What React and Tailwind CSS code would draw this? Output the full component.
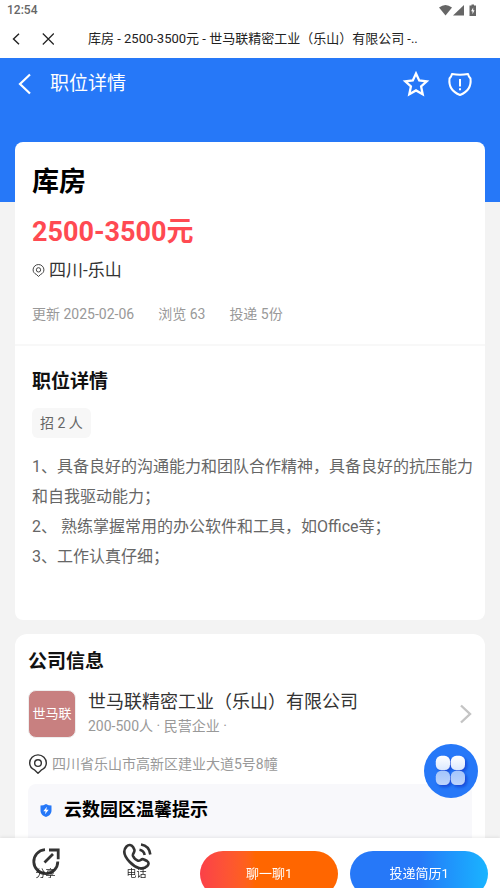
import React, { useState } from "react";

const duties = [
  "1、具备良好的沟通能力和团队合作精神，具备良好的抗压能力和自我驱动能力；",
  "2、 熟练掌握常用的办公软件和工具，如Office等；",
  "3、工作认真仔细；",
];

function PinIcon({ className }) {
  return (
    <svg viewBox="0 0 24 24" fill="none" stroke="currentColor" strokeWidth="1.7" className={className}>
      <path d="M12 23l-3.8-3.6C4.4 17.6 2 14.6 2 10.8a10 9.8 0 0 1 20 0c0 3.8-2.4 6.8-6.2 8.6z" strokeLinejoin="round" />
      <circle cx="12" cy="10.8" r="4" />
    </svg>
  );
}

function StatusBar() {
  return (
    <div className="h-5 pl-[7px] pr-[23px] flex items-center justify-between">
      <span className="text-xs font-medium text-[#666]">12:54</span>
      <svg viewBox="0 0 38 12" fill="#666" className="w-[38px] h-3">
        <path d="M0 3.5Q6.5-1.5 13 3.5L6.5 11.5z" />
        <path d="M14 11.5L25 1v10.5z" />
        <path d="M32.5 1.5V.5h2.500v1h2V12h-6.500V1.5z" />
        <path d="M34.2 3.5v2.7h1.300l-2 4V7.3h-1.400z" fill="#fff" />
      </svg>
    </div>
  );
}

function BrowserBar() {
  return (
    <div className="h-[38px] flex items-center text-[#222]">
      <button aria-label="返回" className="w-8 h-8 flex items-center justify-center">
        <svg viewBox="0 0 12 12" fill="none" stroke="currentColor" strokeWidth="1.4" className="w-3 h-3">
          <path d="M9 0.8L3.5 6l5.5 5.2" />
        </svg>
      </button>
      <button aria-label="关闭" className="w-8 h-8 flex items-center justify-center">
        <svg viewBox="0 0 12 12" fill="none" stroke="currentColor" strokeWidth="1.2" className="w-3 h-3">
          <path d="M0.8 0.5l11 11M11.8 0.5l-11 11" />
        </svg>
      </button>
      <div className="flex-1 min-w-0 pl-6 pr-4 text-[13px] truncate">
        库房 - 2500-3500元 - 世马联精密工业（乐山）有限公司 -..
      </div>
    </div>
  );
}

function PageHeader() {
  const [starred, setStarred] = useState(false);

  return (
    <div className="h-[52px] pl-4 pr-[26px] flex items-center text-white">
      <button aria-label="返回上一页" className="w-[18px] h-6 shrink-0">
        <svg viewBox="0 0 18 24" fill="none" stroke="currentColor" strokeWidth="2.2" className="w-[18px] h-6">
          <path d="M14 2.5L4 12l10 9.5" />
        </svg>
      </button>
      <h1 className="flex-1 pl-4 text-[19px]">职位详情</h1>
      <button aria-label="收藏" onClick={() => setStarred(!starred)} className="w-7 h-7 mr-4">
        <svg viewBox="0 0 28 28" fill={starred ? "currentColor" : "none"} stroke="currentColor" strokeWidth="2.3" className="w-7 h-7">
          <path d="M14 3.5l3.2 7 7.5.8-5.6 5.2 1.6 7.7L14 20.4l-6.7 3.8 1.6-7.7-5.6-5.2 7.5-.8z" />
        </svg>
      </button>
      <button aria-label="举报" className="w-7 h-7">
        <svg viewBox="0 0 28 28" fill="none" stroke="currentColor" strokeWidth="2" className="w-7 h-7">
          <path d="M6 4Q14 5.5 22 4q.4 2 2.5 4.500c.8 7-1.5 13-10.5 16.500C5 21.5 2.7 15.5 3.5 8.5Q5.6 6 6 4z" strokeLinejoin="round" />
          <path d="M14 9v7.5M14 18.3v2" />
        </svg>
      </button>
    </div>
  );
}

function JobCard() {
  return (
    <section className="bg-white rounded-lg">
      <div className="px-[17px] pt-5 pb-[18px] border-b-2 border-[#f8f8f8]">
        <h2 className="text-[27px] leading-10 font-bold text-black">库房</h2>
        <p className="mt-3 text-[27px] leading-9 font-bold text-[#ff4a52]">2500-3500元</p>
        <p className="mt-2 flex items-center gap-1 text-[17px] leading-6 text-[#333]">
          <PinIcon className="w-[13px] h-[13px]" />
          四川-乐山
        </p>
        <p className="mt-5 flex gap-6 text-sm leading-6 text-[#999]">
          <span>更新 2025-02-06</span>
          <span>浏览 63</span>
          <span>投递 5份</span>
        </p>
      </div>
      <div className="pl-[17px] pr-2 pt-[22px] pb-12">
        <h3 className="text-[19px] leading-7 font-bold text-[#111]">职位详情</h3>
        <span className="mt-3 inline-block px-2 rounded-md bg-[#f7f7f7] text-sm leading-[30px] text-[#666]">招 2 人</span>
        <div className="mt-[14px] text-[16px] leading-[30px] text-[#666]">
          {duties.map((d) => (
            <p key={d}>{d}</p>
          ))}
        </div>
      </div>
    </section>
  );
}

function CompanyCard() {
  return (
    <section className="bg-white rounded-xl px-[13px] pt-[14px]">
      <h3 className="text-[19px] leading-7 font-bold text-[#111]">公司信息</h3>
      <a href="#company" className="mt-[14px] flex items-center">
        <span className="w-12 h-12 rounded-lg border border-[#eee] bg-[#c88080] flex items-center justify-center text-[13px] text-white shrink-0">
          世马联
        </span>
        <span className="flex-1 min-w-0 pl-3">
          <span className="block text-lg leading-6 text-[#333]">世马联精密工业（乐山）有限公司</span>
          <span className="block text-sm leading-6 text-[#999]">200-500人 · 民营企业 ·</span>
        </span>
        <svg viewBox="0 0 14 20" fill="none" stroke="#c4c4c4" strokeWidth="2.4" className="w-[14px] h-5">
          <path d="M3 1.5l9 8.5-9 8.5" />
        </svg>
      </a>
      <p className="mt-[14px] flex items-center gap-1 text-sm leading-6 text-[#999]">
        <PinIcon className="w-5 h-5 text-[#333]" />
        四川省乐山市高新区建业大道5号8幢
      </p>
      <div className="mt-2 rounded-lg bg-[#f8f8fb] px-3 pt-3 pb-20">
        <h4 className="flex items-center gap-3 text-lg leading-7 font-bold text-black">
          <svg viewBox="0 0 12 13" className="w-3 h-[13px]">
            <path d="M6 0q2.5 1.6 5.5 1.6V6.5C11.5 10 9 12 6 13 3 12 .5 10 .5 6.5V1.6Q3.5 1.6 6 0z" fill="#2678f8" />
            <path d="M6.9 2.8L3.3 7.2h2.3l-.6 3 3.7-4.500H6.3z" fill="#fff" />
          </svg>
          云数园区温馨提示
        </h4>
      </div>
    </section>
  );
}

function FloatingMenu() {
  return (
    <button aria-label="菜单" className="fixed right-[22px] bottom-[90px] w-[54px] h-[54px] rounded-full bg-[#2678f8]">
      <svg viewBox="0 0 54 54" className="w-[54px] h-[54px]">
        <defs>
          <linearGradient id="top" x1="0" y1="0" x2="0" y2="1">
            <stop offset="0" stopColor="#fff" />
            <stop offset="1" stopColor="#dbe8fe" />
          </linearGradient>
          <linearGradient id="bottom" x1="0" y1="0" x2="0" y2="1">
            <stop offset="0" stopColor="#a3c5fb" />
            <stop offset="1" stopColor="#bdd4fc" />
          </linearGradient>
          <filter id="shade" x="-30%" y="-30%" width="170%" height="170%">
            <feDropShadow dx="2" dy="2" stdDeviation="1.5" floodColor="#0a3fd0" floodOpacity="0.8" />
          </filter>
        </defs>
        <g filter="url(#shade)">
          <rect x="11.8" y="11.8" width="14.2" height="14.2" rx="5.5" fill="url(#top)" />
          <rect x="26.8" y="11.8" width="14.2" height="14.2" rx="5.5" fill="url(#top)" />
          <rect x="11.8" y="26.8" width="14.2" height="14.2" rx="5.5" fill="url(#bottom)" />
          <rect x="26.8" y="26.8" width="14.2" height="14.2" rx="5.5" fill="url(#bottom)" />
        </g>
      </svg>
    </button>
  );
}

function ActionBar() {
  return (
    <nav className="fixed inset-x-0 bottom-0 h-[50px] pr-3 flex items-start overflow-hidden bg-white shadow-[0_-1px_3px_rgba(0,0,0,0.08)] text-[#222]">
      <div className="w-[41%] pt-2 pr-[18px] flex items-start">
        <button className="flex-1 pt-1 flex flex-col items-center">
          <svg viewBox="0 0 30 30" fill="none" stroke="#333" strokeWidth="2.8" className="w-[30px] h-[30px] -mt-1">
            <path d="M14 3.6A12 12 0 1 0 26.8 15.5" />
            <path d="M13.5 16.5L22 8M18 4h9.200v9.200" />
          </svg>
          <span className="-mt-2 text-[10px] leading-3">分享</span>
        </button>
        <button className="flex-1 flex flex-col items-center">
          <svg viewBox="0 0 30 30" fill="none" stroke="#333" strokeWidth="2.6" className="w-[30px] h-[30px] -mt-1">
            <path d="M4.5 4.5c2.2-2.3 5-1.8 6.5.5l1.2 2.300c1.4 3-2.2 4.2-1.2 6.700 1.2 2.5 3 4.1 5 4.700 2.5.7 3.2-2.7 6-1.200l3 1.500c2 1.3 2 3.2.3 5-4.5 4.5-12 2-17.5-4C2.3 14.2.5 8.7 4.5 4.5z" />
            <path d="M17.5 7.8q4.2.7 5.2 5.2M19 2.5q8.3 1.2 9.3 10" />
          </svg>
          <span className="-mt-1 text-[10px] leading-3">电话</span>
        </button>
      </div>
      <div className="flex-1 pt-[13px] flex gap-3 text-[13px] text-white">
        <button className="flex-1 h-[46px] rounded-full bg-linear-to-r from-[#fb4048] to-[#ff6600] to-40%">聊一聊1</button>
        <button className="flex-1 h-[46px] rounded-full bg-linear-to-r from-[#2678f8] from-50% to-[#1ab4ff]">投递简历1</button>
      </div>
    </nav>
  );
}

export default function App() {
  return (
    <div className="h-screen overflow-hidden bg-[#f3f3f3] font-['Roboto','Noto_Sans_CJK_SC',sans-serif]">
      <header className="bg-white">
        <StatusBar />
        <BrowserBar />
      </header>
      <div className="bg-[#2678f8] pb-[92px]">
        <PageHeader />
      </div>
      <main className="-mt-[60px] px-[15px] flex flex-col gap-[14px]">
        <JobCard />
        <CompanyCard />
      </main>
      <FloatingMenu />
      <ActionBar />
    </div>
  );
}
